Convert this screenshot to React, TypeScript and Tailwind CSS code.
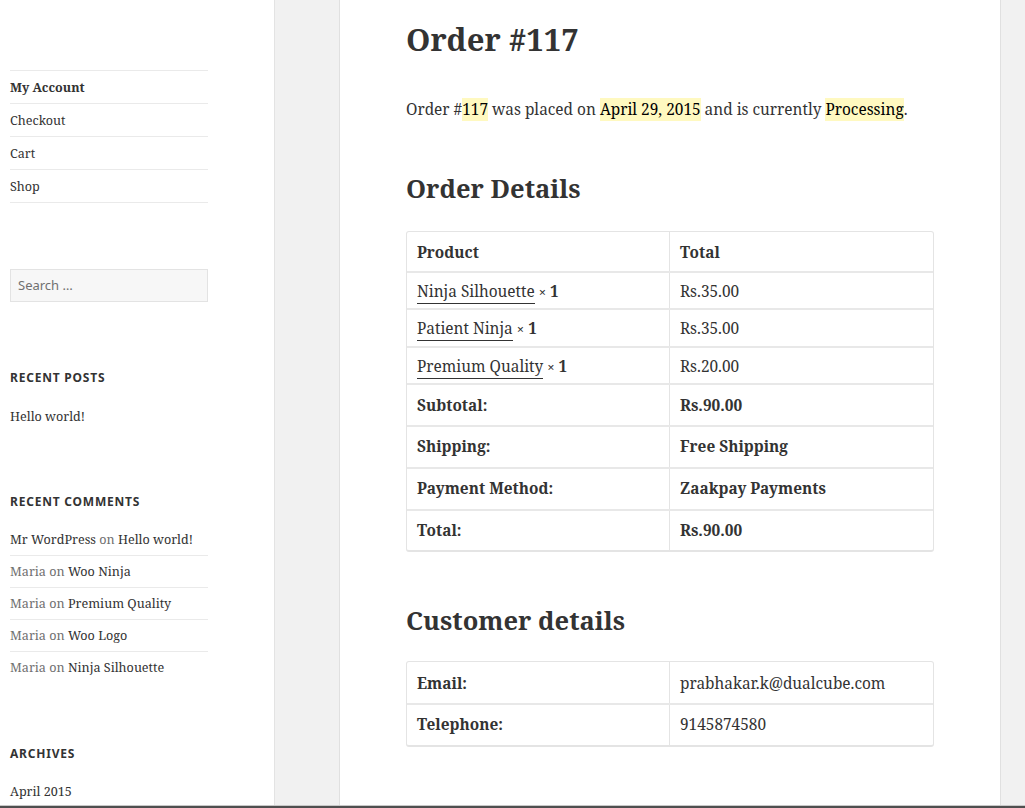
import React from "react";

const rowsItems = [
  { name: "Ninja Silhouette", price: "Rs.35.00", h: "h-[37px]" },
  { name: "Patient Ninja", price: "Rs.35.00", h: "h-[38px]" },
  { name: "Premium Quality", price: "Rs.20.00", h: "h-[37px]" },
];

const totals = [
  { label: "Subtotal:", value: "Rs.90.00", h: "h-[42px]", pt: "pt-[2px]" },
  { label: "Shipping:", value: "Free Shipping", h: "h-[42px]", pt: "" },
  { label: "Payment Method:", value: "Zaakpay Payments", h: "h-[42px]", pt: "" },
  { label: "Total:", value: "Rs.90.00", h: "h-[41px]", pt: "" },
];

const comments = [
  { who: "Mr WordPress", link: true, post: "Hello world!" },
  { who: "Maria", link: false, post: "Woo Ninja" },
  { who: "Maria", link: false, post: "Premium Quality" },
  { who: "Maria", link: false, post: "Woo Logo" },
  { who: "Maria", link: false, post: "Ninja Silhouette" },
];

function WidgetTitle({ children, mt }: { children: React.ReactNode; mt: string }) {
  return (
    <h2
      className={`${mt} h-[20px] leading-[20px] font-['Noto_Sans',sans-serif] font-bold text-[12px] uppercase tracking-[0.065em] text-[#333333]`}
    >
      {children}
    </h2>
  );
}

export default function App() {
  return (
    <div className="h-[808px] w-[1025px] overflow-hidden flex flex-col bg-[#f1f1f1] text-[#333333] font-['Noto_Serif','DejaVu_Serif',serif]">
      <div className="flex h-[805px] shrink-0">
        {/* Sidebar */}
        <aside className="w-[275px] shrink-0 bg-white border-r border-[#e3e3e3] px-[10px] text-[12.6px]">
          <ul className="mt-[70px] w-[198px] border-t border-[#eaeaea]">
            {["My Account", "Checkout", "Cart", "Shop"].map((t, i) => (
              <li
                key={t}
                className={`h-[33px] border-b border-[#eaeaea] leading-[34px] ${i === 0 ? "font-bold" : ""}`}
              >
                {t}
              </li>
            ))}
          </ul>

          <input
            placeholder="Search …"
            className="mt-[66px] block w-[198px] h-[33px] border border-[#e3e3e3] bg-[#f7f7f7] pl-[7px] pb-[1px] font-['Noto_Sans',sans-serif] text-[13px] text-[#333333] placeholder:text-[#707070] outline-none"
          />

          <WidgetTitle mt="mt-[66px]">Recent Posts</WidgetTitle>
          <ul className="mt-[12px] w-[198px]">
            <li className="h-[32px] leading-[34px]">Hello world!</li>
          </ul>

          <WidgetTitle mt="mt-[60px]">Recent Comments</WidgetTitle>
          <ul className="mt-[12px] w-[198px]">
            {comments.map((c, i) => (
              <li
                key={i}
                className={`h-[32px] leading-[32px] ${i < comments.length - 1 ? "border-b border-[#eaeaea]" : ""}`}
              >
                <span className={c.link ? "text-[#333333]" : "text-[#707070]"}>{c.who}</span>
                <span className="text-[#707070]"> on </span>
                <span className="text-[#333333]">{c.post}</span>
              </li>
            ))}
          </ul>

          <WidgetTitle mt="mt-[60px]">Archives</WidgetTitle>
          <ul className="mt-[12px] w-[198px]">
            <li className="h-[32px] leading-[32px]">April 2015</li>
          </ul>
        </aside>

        <div className="w-[64px] shrink-0" />

        {/* Main article */}
        <main className="w-[662px] shrink-0 bg-white border-x border-[#e0e0e0] px-[66px] text-[15.4px]">
          <h1 className="mt-[15px] h-[48px] leading-[48px] text-[31px] font-bold text-[#333333]">
            Order #117
          </h1>

          <p className="mt-[35px] h-[24px] leading-[24px]">
            Order #<span className="bg-[#fff9c0] text-black py-[1px]">117</span> was placed on{" "}
            <span className="bg-[#fff9c0] text-black py-[1px]">April 29, 2015</span> and is currently{" "}
            <span className="bg-[#fff9c0] text-black py-[1px]">Processing</span>.
          </p>

          <h2 className="mt-[48px] h-[36px] leading-[36px] text-[25.5px] font-bold">Order Details</h2>

          <div className="mt-[25px] w-[528px] border border-b-2 border-[#e4e4e4] rounded-[3px]">
            <div className="grid grid-cols-[262px_1fr] h-[39px] font-bold">
              <div className="pl-[10px] pt-[2px] flex items-center">Product</div>
              <div className="pl-[10px] pt-[2px] flex items-center border-l border-[#e4e4e4]">Total</div>
            </div>
            {rowsItems.map((r) => (
              <div key={r.name} className={`grid grid-cols-[262px_1fr] ${r.h} border-t-2 border-[#e8e8e8]`}>
                <div className="pl-[10px] pt-[2px] flex items-center">
                  <span>
                    <span className="border-b border-[#333333] pb-[1px]">{r.name}</span>
                    <strong className="font-bold">
                      {" "}
                      <span className="text-[13px]">×</span> 1
                    </strong>
                  </span>
                </div>
                <div className="pl-[10px] pt-[2px] flex items-center border-l border-[#e4e4e4]">{r.price}</div>
              </div>
            ))}
            {totals.map((r) => (
              <div key={r.label} className={`grid grid-cols-[262px_1fr] ${r.h} border-t-2 border-[#e8e8e8] font-bold`}>
                <div className={`pl-[10px] ${r.pt} flex items-center`}>{r.label}</div>
                <div className={`pl-[10px] ${r.pt} flex items-center border-l border-[#e4e4e4]`}>{r.value}</div>
              </div>
            ))}
          </div>

          <h2 className="mt-[50px] h-[36px] leading-[36px] text-[25.5px] font-bold">Customer details</h2>

          <div className="mt-[23px] w-[528px] border border-b-2 border-[#e4e4e4] rounded-[3px]">
            <div className="grid grid-cols-[262px_1fr] h-[41px]">
              <div className="pl-[10px] pt-[2px] flex items-center font-bold">Email:</div>
              <div className="pl-[10px] pt-[2px] flex items-center border-l border-[#e4e4e4]">prabhakar.k@dualcube.com</div>
            </div>
            <div className="grid grid-cols-[262px_1fr] h-[42px] border-t-2 border-[#e8e8e8]">
              <div className="pl-[10px] flex items-center font-bold">Telephone:</div>
              <div className="pl-[10px] flex items-center border-l border-[#e4e4e4]">9145874580</div>
            </div>
          </div>
        </main>

        <div className="flex-1" />
      </div>
      <div className="h-[1px] shrink-0 bg-[#c8c8c8]" />
      <div className="h-[2px] shrink-0 bg-[#4f4f4f]" />
    </div>
  );
}
